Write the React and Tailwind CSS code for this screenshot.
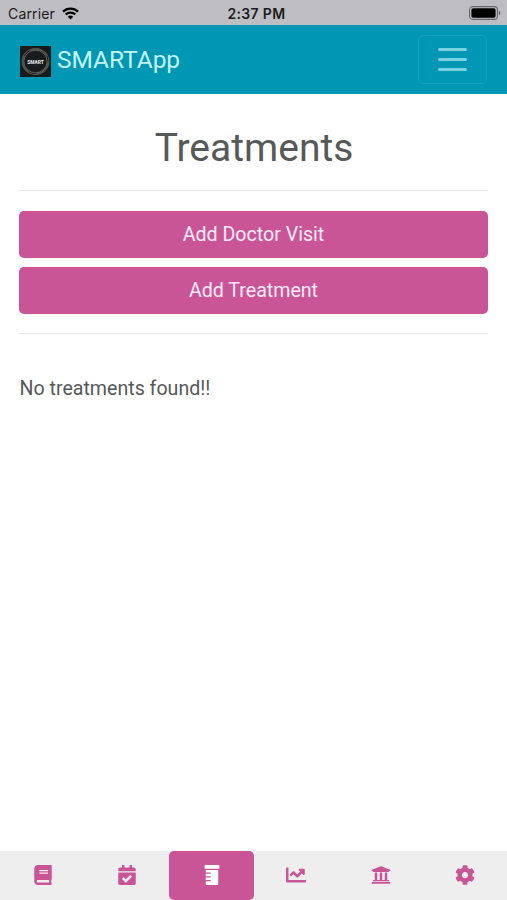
import React, { useState } from "react";
import {
  FaBook,
  FaCalendarCheck,
  FaPrescriptionBottle,
  FaChartLine,
  FaUniversity,
  FaCog,
} from "react-icons/fa";

const tabs = [
  { id: "diary", label: "Diary", Icon: FaBook },
  { id: "calendar", label: "Calendar", Icon: FaCalendarCheck },
  { id: "treatments", label: "Treatments", Icon: FaPrescriptionBottle },
  { id: "charts", label: "Charts", Icon: FaChartLine },
  { id: "resources", label: "Resources", Icon: FaUniversity },
  { id: "settings", label: "Settings", Icon: FaCog },
];

function StatusBar() {
  return (
    <div className="grid grid-cols-3 items-center h-[25px] pt-[2px] pl-[8px] pr-[6px] bg-[#bebdc2] text-[#1c1c1f] text-[14px] leading-none font-[Inter,sans-serif]">
      <div className="flex items-center gap-[7px]">
        <span className="tracking-[0.15px]">Carrier</span>
        <svg width="17" height="13" viewBox="0 0 17 13" fill="none">
          <path d="M1 4.6a10.8 10.8 0 0 1 15 0" stroke="black" strokeWidth="2.3" />
          <path d="M3.7 7.5a7 7 0 0 1 9.6 0" stroke="black" strokeWidth="2.2" />
          <path d="M8.5 12.6 5.8 9.8a4 4 0 0 1 5.4 0z" fill="black" />
        </svg>
      </div>
      <span className="text-center text-[14px] font-semibold tracking-[0.35px] pt-px pl-[4px]">
        2:37 PM
      </span>
      <svg className="justify-self-end -mt-px" width="32" height="14" viewBox="0 0 32 14">
        <rect x="0.6" y="0.6" width="27.8" height="12.8" rx="3.2" fill="none" stroke="#67666a" strokeWidth="1.1" />
        <rect x="2.4" y="2.3" width="24.2" height="9.4" rx="1.8" fill="black" />
        <path d="M29.8 4.8c2 .7 2 3.7 0 4.4z" fill="#67666a" />
      </svg>
    </div>
  );
}

function Logo() {
  return (
    <svg width="31" height="31" viewBox="0 0 30 31" preserveAspectRatio="none">
      <rect width="30" height="31" fill="#171b1d" />
      <circle cx="15" cy="15.5" r="13" fill="none" stroke="#63513f" strokeWidth="1" />
      <circle cx="15" cy="15.5" r="12.2" fill="none" stroke="#4d7063" strokeWidth="0.9" strokeDasharray="18 8" />
      <circle cx="15" cy="15.5" r="11.3" fill="none" stroke="#77716d" strokeWidth="0.8" />
      <text
        x="15"
        y="17.6"
        textAnchor="middle"
        textLength="16"
        lengthAdjust="spacingAndGlyphs"
        fontSize="5.8"
        fontWeight="700"
        fill="#f0f0f0"
      >
        SMART
      </text>
    </svg>
  );
}

function Navbar() {
  return (
    <nav className="flex items-center justify-between h-[69px] px-5 bg-[#0097b4]">
      <a className="flex items-center gap-[6px] pt-[3px] text-[24.5px] text-[#c5f5fa]">
        <Logo />
        <span className="pb-[2px] -tracking-[0.05px]">SMARTApp</span>
      </a>
      <button
        aria-label="Toggle navigation"
        className="flex flex-col items-center justify-center gap-[7.5px] w-[69px] h-[49px] border border-[#14a1bc] rounded-[5px]"
      >
        <span className="w-[29px] h-[2.5px] rounded-full bg-[#79d3df]" />
        <span className="w-[29px] h-[2.5px] rounded-full bg-[#79d3df]" />
        <span className="w-[29px] h-[2.5px] rounded-full bg-[#79d3df]" />
      </button>
    </nav>
  );
}

export default function App() {
  const [activeTab, setActiveTab] = useState("treatments");

  return (
    <div className="flex flex-col h-screen bg-white text-[#555958] font-[Roboto,sans-serif]">
      <StatusBar />
      <Navbar />

      <main className="flex-1 px-[19px]">
        <h1 className="pt-[30px] pl-px text-center text-[39px] leading-[48px]">
          Treatments
        </h1>
        <hr className="mt-[18px] border-[#e8e8e8]" />
        <div className="flex flex-col gap-[9px] mt-5 text-[19.6px] text-[#ffeaf8]">
          <button className="h-[47px] rounded-[5px] bg-[#c95597]">
            Add Doctor Visit
          </button>
          <button className="h-[47px] rounded-[5px] bg-[#c95597]">
            Add Treatment
          </button>
        </div>
        <hr className="mt-[19px] border-[#e8e8e8]" />
        <p className="mt-[40px] pl-[0.5px] text-[19.6px] leading-[29px]">
          No treatments found!!
        </p>
      </main>

      {/* Bottom tabs */}
      <div className="grid grid-cols-6 h-[49px] bg-[#eeeeee]">
        {tabs.map(({ id, label, Icon }) => (
          <button
            key={id}
            aria-label={label}
            onClick={() => setActiveTab(id)}
            className={`flex items-center justify-center pb-[2px] pl-px rounded-[5px] ${
              activeTab === id ? "bg-[#c95597] text-white" : "text-[#c95597]"
            }`}
          >
            <Icon size={20} />
          </button>
        ))}
      </div>
    </div>
  );
}
